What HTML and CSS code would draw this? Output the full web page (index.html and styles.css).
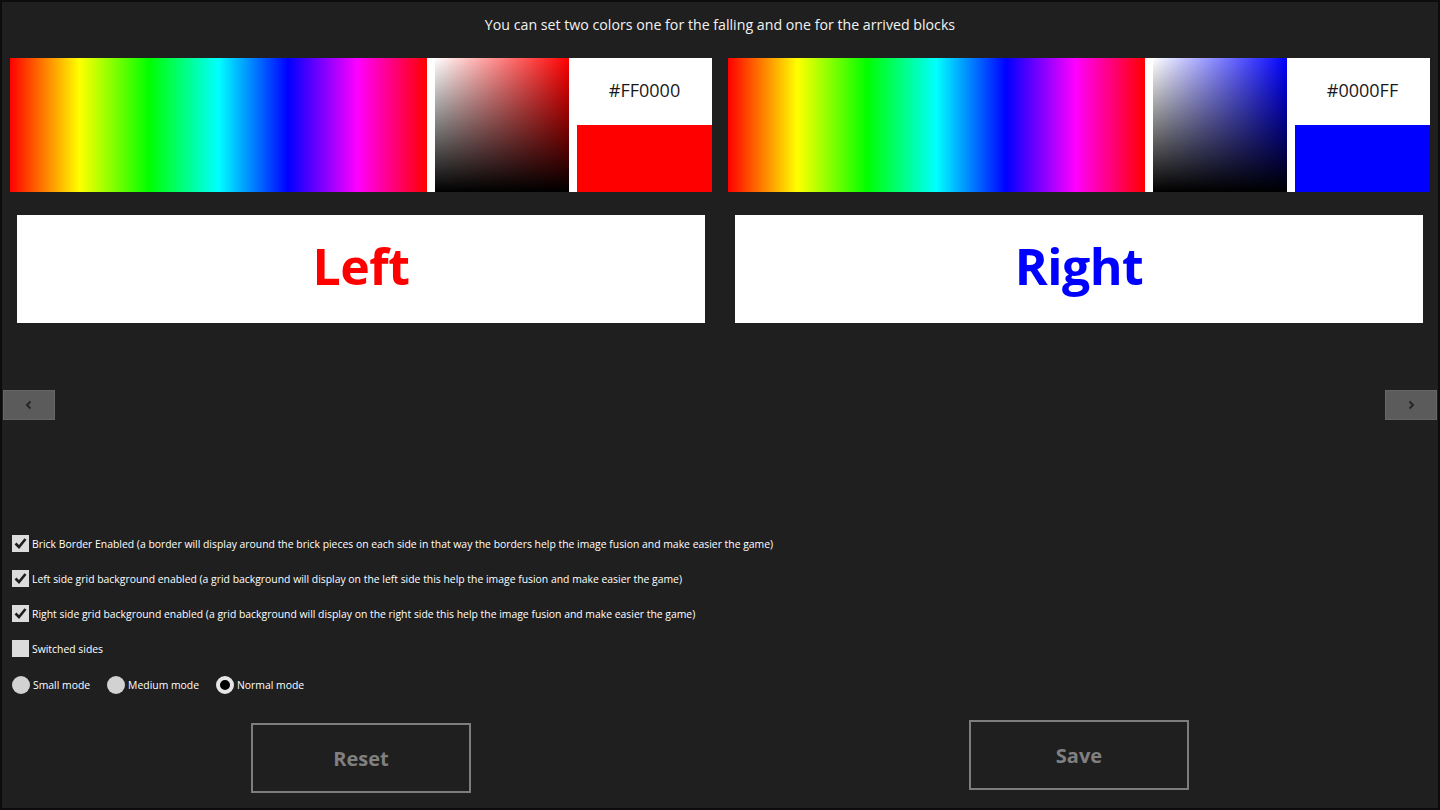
FILE: index.html
```html
<!DOCTYPE html>
<html lang="en">
<head>
    <meta charset="UTF-8">
    <title>Color settings</title>
    <link rel="stylesheet" href="styles.css">
</head>
<body>
    <div class="page">
        <div class="title">You can set two colors one for the falling and one for the arrived blocks</div>

        <!-- two color pickers: hue strip, saturation square, hex + swatch -->
        <div class="pickers">
            <div class="picker">
                <div class="hue"></div>
                <div class="panel">
                    <div class="sv sv-red"></div>
                    <div class="side">
                        <div class="hex">#FF0000</div>
                        <div class="swatch swatch-red"></div>
                    </div>
                </div>
            </div>
            <div class="picker">
                <div class="hue"></div>
                <div class="panel">
                    <div class="sv sv-blue"></div>
                    <div class="side">
                        <div class="hex">#0000FF</div>
                        <div class="swatch swatch-blue"></div>
                    </div>
                </div>
            </div>
        </div>

        <div class="previews">
            <div class="preview preview-left">Left</div>
            <div class="preview preview-right">Right</div>
        </div>

        <div class="nav">
            <button class="nav-btn">
                <svg width="10" height="10" viewBox="0 0 10 10"><path d="M6.5 1.5 L3 5 L6.5 8.5" fill="none" stroke="#262626" stroke-width="2"/></svg>
            </button>
            <button class="nav-btn">
                <svg width="10" height="10" viewBox="0 0 10 10"><path d="M3.5 1.5 L7 5 L3.5 8.5" fill="none" stroke="#262626" stroke-width="2"/></svg>
            </button>
        </div>

        <div class="options">
            <label class="check-row">
                <span class="box"><svg width="17" height="17" viewBox="0 0 17 17"><path d="M3.5 8.5 L7 12 L13.5 4" fill="none" stroke="#1e1e1e" stroke-width="2.6"/></svg></span>
                Brick Border Enabled (a border will display around the brick pieces on each side in that way the borders help the image fusion and make easier the game)
            </label>
            <label class="check-row">
                <span class="box"><svg width="17" height="17" viewBox="0 0 17 17"><path d="M3.5 8.5 L7 12 L13.5 4" fill="none" stroke="#1e1e1e" stroke-width="2.6"/></svg></span>
                Left side grid background enabled (a grid background will display on the left side this help the image fusion and make easier the game)
            </label>
            <label class="check-row">
                <span class="box"><svg width="17" height="17" viewBox="0 0 17 17"><path d="M3.5 8.5 L7 12 L13.5 4" fill="none" stroke="#1e1e1e" stroke-width="2.6"/></svg></span>
                Right side grid background enabled (a grid background will display on the right side this help the image fusion and make easier the game)
            </label>
            <label class="check-row">
                <span class="box"></span>
                Switched sides
            </label>

            <div class="radio-row">
                <label class="radio"><span class="dot"></span>Small mode</label>
                <label class="radio"><span class="dot"></span>Medium mode</label>
                <label class="radio"><span class="dot dot-on"></span>Normal mode</label>
            </div>
        </div>

        <div class="actions">
            <div class="action-cell"><button class="action action-reset">Reset</button></div>
            <div class="action-cell"><button class="action">Save</button></div>
        </div>
    </div>
</body>
</html>
```

FILE: styles.css
```css
* {
    box-sizing: border-box;
}

body {
    margin: 0;
    background: #0c0c0c;
    font-family: 'Open Sans', 'Noto Sans', sans-serif;
    color: #ffffff;
}

.page {
    width: 1440px;
    height: 810px;
    border: 2px solid #0c0c0c;
    background: #1f1f1f;
    display: flex;
    flex-direction: column;
    overflow: hidden;
}

.title {
    margin-top: 13px;
    height: 20px;
    line-height: 20px;
    text-align: center;
    font-size: 14.2px;
    color: #f2f2f2;
}

/* color pickers */
.pickers {
    margin-top: 23px;
    padding: 0 8px;
    display: flex;
    gap: 16px;
}

.picker {
    flex: 1;
    height: 134px;
    display: flex;
}

.hue {
    width: 417px;
    background: linear-gradient(to right, #ff0000 0%, #ffff00 16.67%, #00ff00 33.33%, #00ffff 50%, #0000ff 66.67%, #ff00ff 83.33%, #ff0000 100%);
}

.panel {
    flex: 1;
    background: #ffffff;
    display: flex;
    padding-left: 8px;
}

.sv {
    width: 134px;
}

.sv-red {
    background: linear-gradient(to top, #000000, rgba(0, 0, 0, 0)), linear-gradient(to right, #ffffff, #ff0000);
}

.sv-blue {
    background: linear-gradient(to top, #000000, rgba(0, 0, 0, 0)), linear-gradient(to right, #ffffff, #0000ff);
}

.side {
    flex: 1;
    display: flex;
    flex-direction: column;
}

.hex {
    flex: 1;
    display: flex;
    align-items: center;
    justify-content: center;
    padding-left: 8px;
    padding-bottom: 4px;
    color: #1a1a1a;
    font-size: 18px;
}

.swatch {
    height: 67px;
    margin-left: 8px;
}

.swatch-red { background: #ff0000; }
.swatch-blue { background: #0000ff; }

/* text previews */
.previews {
    margin-top: 23px;
    padding: 0 15px;
    display: flex;
    gap: 30px;
}

.preview {
    flex: 1;
    height: 108px;
    padding-bottom: 6px;
    background: #ffffff;
    display: flex;
    align-items: center;
    justify-content: center;
    font-size: 50px;
    font-weight: bold;
    letter-spacing: -0.5px;
}

.preview-left { color: #ff0000; }
.preview-right { color: #0000ff; }

/* flip view arrows */
.nav {
    margin-top: 67px;
    padding: 0 1px;
    display: flex;
    justify-content: space-between;
}

.nav-btn {
    width: 52px;
    height: 30px;
    background: #5b5b5b;
    border: 1px solid #666666;
    padding: 0;
    display: flex;
    align-items: center;
    justify-content: center;
}

/* options */
.options {
    margin-top: 115px;
    padding-left: 10px;
    display: flex;
    flex-direction: column;
}

.check-row {
    height: 17px;
    margin-bottom: 18px;
    display: flex;
    align-items: center;
    gap: 3px;
    font-size: 10.4px;
}

.box {
    width: 17px;
    height: 17px;
    background: #dcdcdc;
    display: flex;
}

.radio-row {
    height: 17px;
    margin-top: 1px;
    display: flex;
    gap: 17px;
}

.radio {
    display: flex;
    align-items: center;
    gap: 3px;
    font-size: 10.4px;
}

.dot {
    width: 18px;
    height: 18px;
    border-radius: 50%;
    background: #d2d2d2;
}

.dot-on {
    background: #000000;
    border: 4px solid #e6e6e6;
}

/* bottom buttons */
.actions {
    margin-top: 27px;
    display: flex;
}

.action-cell {
    flex: 1;
    display: flex;
    justify-content: center;
    align-items: flex-start;
}

.action {
    width: 220px;
    height: 70px;
    background: transparent;
    border: 2px solid #7d7d7d;
    color: #808080;
    font-family: 'Open Sans', 'Noto Sans', sans-serif;
    font-size: 20px;
    font-weight: bold;
}

.action-reset {
    margin-top: 3px;
}
```
